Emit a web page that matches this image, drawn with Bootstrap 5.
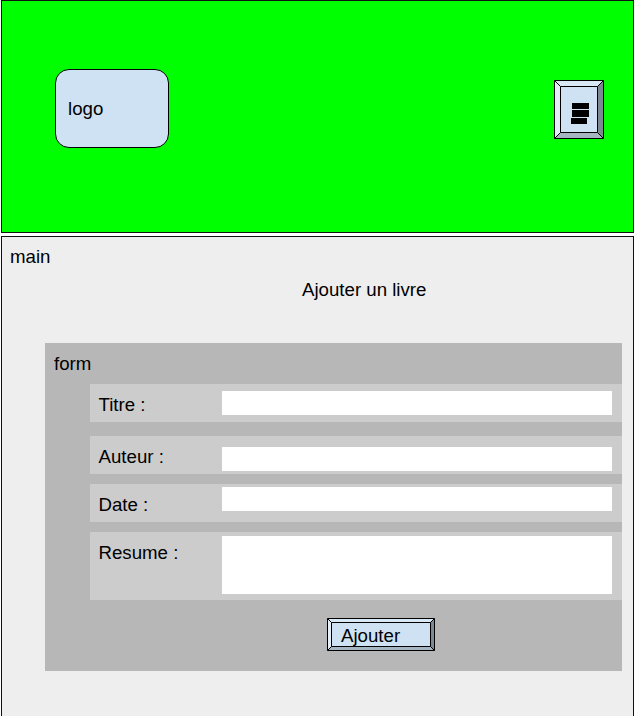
<!DOCTYPE html>
<html lang="fr">
<head>
<meta charset="utf-8">
<meta name="viewport" content="width=device-width, initial-scale=1">
<title>Ajouter un livre</title>
<link href="https://cdn.jsdelivr.net/npm/bootstrap@5.3.0/dist/css/bootstrap.min.css" rel="stylesheet">
<style>
  body { font-family: "Liberation Sans", Arial, sans-serif; font-size: 18.67px; line-height: 22px; color: #000; background: #fff; height: 716px; overflow: hidden; }
  .site-header { width: 633px; height: 233px; margin-left: 1px; padding: 0 29px 0 53px; background: #0f0; border: 1px solid #111; }
  .logo-box { width: 114px; height: 79px; margin-top: 68px; padding: 28px 12px 0; background: #cfe2f3; border: 1px solid #000; border-radius: 14px; }
  .menu-btn { width: 50px; height: 59px; margin-top: 79px; }
  .page-main { width: 633px; height: 500px; margin: 3px 0 0 1px; padding: 9px 11px 0 43px; background: #eee; border: 1px solid #111; }
  .main-label { margin-left: -35px; }
  .page-title { font-size: inherit; line-height: 22px; margin: 11px 0 42px 257px; font-weight: 400; }
  .book-form { height: 328px; background: #b7b7b7; padding-top: 10px; }
  .form-name { margin: 0 0 9px 9px; }
  .field-row { height: 38px; margin-left: 44.5px; padding: 0 10px 0 9px; background: #ccc; }
  .field-row label { width: 123.5px; padding-top: 10px; }
  .field-row .form-control { width: 390px; height: 24px; min-height: 0; resize: none; background: #fff; }
  .row-titre { margin-bottom: 14px; }
  .row-titre .form-control { margin-top: 7px; }
  .row-auteur { margin-bottom: 10px; }
  .row-auteur .form-control { margin-top: 11px; }
  .row-date { margin-bottom: 10px; }
  .row-date .form-control { margin-top: 3px; }
  .row-resume { height: 68px; }
  .row-resume .form-control { height: 58px; margin-top: 4px; }
  .submit-btn { width: 108px; height: 33px; margin: 18px 0 0 282px; color: #000; font-size: inherit; line-height: 22px; }
  .submit-btn span { padding: 7px 0 0 14px; }
</style>
<script src="https://cdn.jsdelivr.net/npm/bootstrap@5.3.0/dist/js/bootstrap.bundle.min.js"></script>
</head>
<body>
<header class="site-header d-flex justify-content-between align-items-start">
  <div class="logo-box">logo</div>
  <button type="button" class="menu-btn btn p-0 border-0 rounded-0 d-block" aria-label="Menu">
    <svg class="d-block" width="50" height="59" viewBox="0 0 50 59">
      <path fill="#cfe2f3" d="M0 0h50v59H0z"/>
      <path fill="#d9e8f5" d="M.5.5h49l-6 6h-37z"/>
      <path fill="#e2edf8" d="M.5.5l6 6v46l-6 6z"/>
      <path fill="#7c8892" d="M49.5.5v58l-6-6v-46z"/>
      <path fill="#a6b5c2" d="M.5 58.5l6-6h37l6 6z"/>
      <path fill="none" stroke="#000" d="M.5.5h49v58H.5zM6.5 6.5h37v46h-37zM.5.5l6 6M49.5.5l-6 6M.5 58.5l6-6M49.5 58.5l-6-6"/>
      <path d="M18 23h17v6H18zM18 30h17v7H18zM17 38h16v6H17z"/>
    </svg>
  </button>
</header>
<main class="page-main">
  <div class="main-label">main</div>
  <h1 class="page-title">Ajouter un livre</h1>
  <form class="book-form">
    <div class="form-name">form</div>
    <div class="field-row row-titre d-flex align-items-start">
      <label for="titre">Titre :</label>
      <input id="titre" type="text" class="form-control border-0 rounded-0 p-0">
    </div>
    <div class="field-row row-auteur d-flex align-items-start">
      <label for="auteur">Auteur :</label>
      <input id="auteur" type="text" class="form-control border-0 rounded-0 p-0">
    </div>
    <div class="field-row row-date d-flex align-items-start">
      <label for="date">Date :</label>
      <input id="date" type="text" class="form-control border-0 rounded-0 p-0">
    </div>
    <div class="field-row row-resume d-flex align-items-start">
      <label for="resume">Resume :</label>
      <textarea id="resume" class="form-control border-0 rounded-0 p-0"></textarea>
    </div>
    <button type="button" class="submit-btn btn p-0 border-0 rounded-0 d-block position-relative text-start">
      <svg class="d-block" width="108" height="33" viewBox="0 0 108 33">
        <path fill="#cfe2f3" d="M0 0h108v33H0z"/>
        <path fill="#d9e8f5" d="M.5.5h107l-4 4h-99z"/>
        <path fill="#e2edf8" d="M.5.5l4 4v24l-4 4z"/>
        <path fill="#7c8892" d="M107.500.5v32l-4-4v-24z"/>
        <path fill="#a6b5c2" d="M.5 32.500l4-4h99l4 4z"/>
        <path fill="none" stroke="#000" d="M.5.5h107v32H.5zM4.500 4.500h99v24h-99zM.5.5l4 4M107.500.5l-4 4M.5 32.500l4-4M107.500 32.500l-4-4"/>
      </svg>
      <span class="position-absolute top-0 start-0">Ajouter</span>
    </button>
  </form>
</main>
</body>
</html>
